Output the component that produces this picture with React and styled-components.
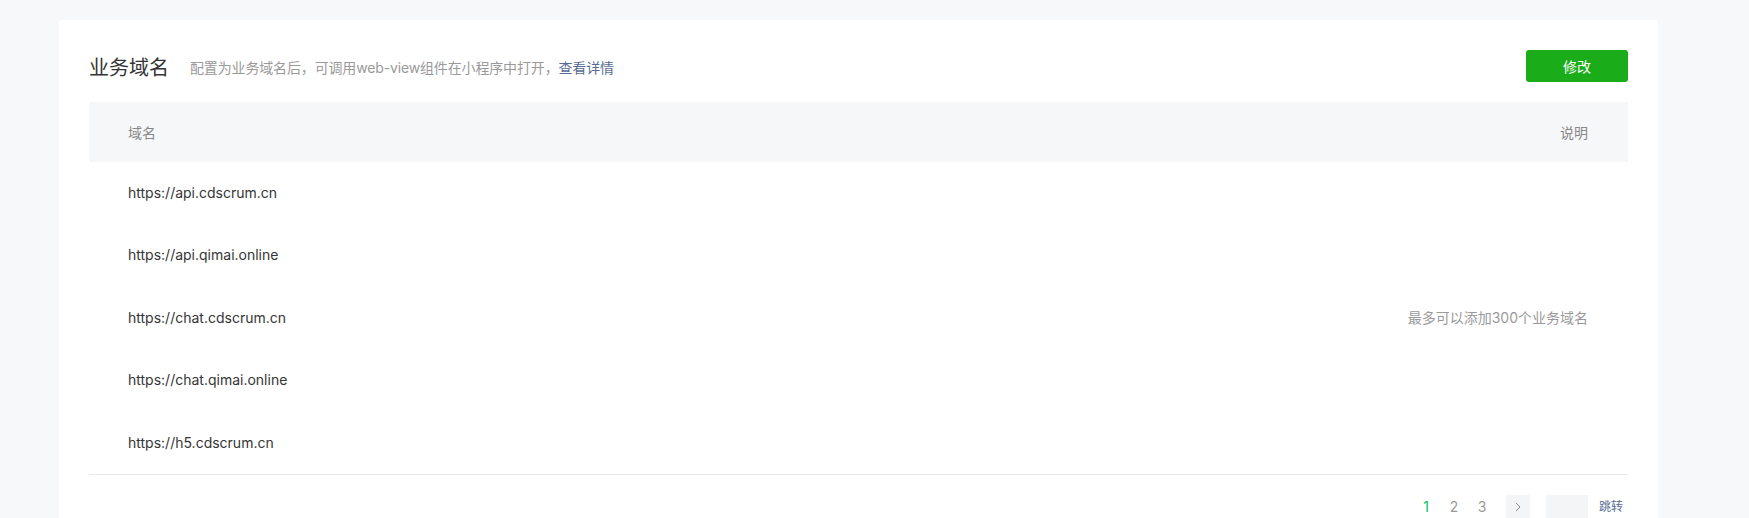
import React from "react"
import styled, { createGlobalStyle } from "styled-components"

const GlobalStyle = createGlobalStyle`
  html, body {
    margin: 0;
    padding: 0;
    background: #f7f8fa;
    font-family: "Inter", "Noto Sans CJK SC", sans-serif;
    font-size: 14px;
    color: #353535;
  }
`

const Page = styled.div`
  padding: 20px 0 0 59px;
  min-height: 518px;
  box-sizing: border-box;
`

const Card = styled.section`
  width: 1599px;
  box-sizing: border-box;
  background: #fff;
  border-radius: 4px 4px 0 0;
  padding: 30px 30px 0;
`

const Head = styled.div`
  display: flex;
  align-items: center;
  height: 32px;
  margin-bottom: 20px;
`

const Title = styled.h2`
  margin: 0;
  font-size: 20px;
  font-weight: 400;
  color: #353535;
  line-height: 32px;
  position: relative;
  top: 2px;
`

const Desc = styled.p`
  margin: 0 0 0 21px;
  flex: 1;
  font-size: 14px;
  color: #9a9a9a;
  line-height: 32px;
  letter-spacing: -0.15px;
  position: relative;
  top: 2px;
`

const Link = styled.a`
  color: #576b95;
  text-decoration: none;
`

const Button = styled.button`
  width: 102px;
  height: 32px;
  border: 0;
  border-radius: 3px;
  background: #1aad19;
  color: #fff;
  font-family: inherit;
  font-size: 14px;
  cursor: pointer;
`

const Table = styled.table`
  width: 100%;
  border-collapse: collapse;
  border-spacing: 0;
  border-bottom: 1px solid #e7e7eb;
`

const Th = styled.th`
  height: 60px;
  padding: 0 40px 0 39px;
  background: #f6f7f9;
  font-weight: 400;
  color: #888;
  text-align: ${({ $right }) => ($right ? "right" : "left")};
`

const Td = styled.td`
  padding: 20px 40px 20px 39px;
  line-height: 22.4px;
  color: ${({ $muted }) => ($muted ? "#9a9a9a" : "#353535")};
  text-align: ${({ $right }) => ($right ? "right" : "left")};
  vertical-align: middle;
`

const Pager = styled.div`
  display: flex;
  align-items: center;
  justify-content: flex-end;
  padding: 20px 5px 0 0;
  height: 24px;
`

const PageNum = styled.span`
  width: 28px;
  text-align: center;
  color: ${({ $active }) => ($active ? "#07c160" : "#9a9a9a")};
  line-height: 24px;
`

const Arrow = styled.span`
  width: 24px;
  height: 24px;
  margin-left: 10px;
  background: #f4f5f7;
  display: flex;
  align-items: center;
  justify-content: center;
`

const JumpInput = styled.span`
  width: 42px;
  height: 24px;
  margin-left: 16px;
  background: #f4f5f7;
`

const Jump = styled.a`
  margin-left: 11px;
  font-size: 12px;
  color: #576b95;
  line-height: 24px;
`

const domains = [
  "https://api.cdscrum.cn",
  "https://api.qimai.online",
  "https://chat.cdscrum.cn",
  "https://chat.qimai.online",
  "https://h5.cdscrum.cn",
]

const App = () => {
  return (
    <Page>
      <GlobalStyle />
      <Card>
        <Head>
          <Title>业务域名</Title>
          <Desc>
            配置为业务域名后，可调用web-view组件在小程序中打开，
            <Link href="#">查看详情</Link>
          </Desc>
          <Button>修改</Button>
        </Head>
        <Table>
          <thead>
            <tr>
              <Th>域名</Th>
              <Th $right>说明</Th>
            </tr>
          </thead>
          <tbody>
            {domains.map((d, i) => (
              <tr key={d}>
                <Td>{d}</Td>
                {i === 0 && (
                  <Td $muted $right rowSpan={domains.length}>
                    最多可以添加300个业务域名
                  </Td>
                )}
              </tr>
            ))}
          </tbody>
        </Table>
        <Pager>
          <PageNum $active>1</PageNum>
          <PageNum>2</PageNum>
          <PageNum>3</PageNum>
          <Arrow>
            <svg width="8" height="10" viewBox="0 0 8 10">
              <path d="M2 1l4 4-4 4" fill="none" stroke="#888" strokeWidth="1" />
            </svg>
          </Arrow>
          <JumpInput />
          <Jump>跳转</Jump>
        </Pager>
      </Card>
    </Page>
  )
}

export default App
